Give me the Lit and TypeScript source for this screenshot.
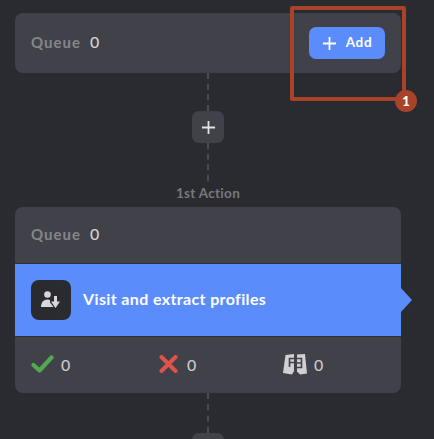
import { LitElement, html, css, svg } from 'lit';
import { customElement } from 'lit/decorators.js';

const plus = (size: number) => svg`<svg width=${size} height=${size} viewBox="0 0 16 16" fill="none" stroke="currentColor" stroke-width="1.9"><path d="M8 1v14M1 8h14"/></svg>`;

@customElement('app-root')
export class AppRoot extends LitElement {
  static styles = css`
    :host {
      display: block;
      position: relative;
      width: 434px;
      height: 439px;
      overflow: hidden;
      background: #2a2b30;
      font-family: Lato, 'Open Sans', sans-serif;
    }
    .flow {
      width: 386px;
      margin-left: 15px;
      padding-top: 13px;
      display: flex;
      flex-direction: column;
      align-items: center;
    }
    .card {
      width: 100%;
      background: #414249;
      border-radius: 8px;
    }
    .queue {
      height: 60px;
      box-sizing: border-box;
      padding: 0 16px 4px;
      display: flex;
      align-items: center;
      justify-content: space-between;
      font-size: 15px;
      font-weight: 700;
      letter-spacing: 1px;
    }
    .queue-text { display: flex; align-items: baseline; gap: 9px; color: #85868a; }
    .queue-text b { color: #d4d4d6; font-weight: 500; font-size: 16px; letter-spacing: 0; }
    .add {
      width: 76px;
      height: 32px;
      margin-bottom: -4px;
      background: #5b8cfb;
      border-radius: 7px;
      color: #fff;
      display: flex;
      align-items: center;
      justify-content: center;
      gap: 9px;
      font-size: 13.5px;
      font-weight: 700;
      letter-spacing: 0.7px;
    }
    .add span { margin-bottom: 2px; }
    .line { width: 0; border-left: 2px dashed #4b4c52; }
    .plus {
      width: 32px;
      height: 32px;
      flex: none;
      border-radius: 7px;
      background: #414249;
      color: #e2e2e3;
      display: flex;
      align-items: center;
      justify-content: center;
    }
    .step-label {
      font-size: 13.5px;
      font-weight: 700;
      line-height: 16px;
      color: #77787c;
      margin: 4px 0 6px;
      letter-spacing: 0.3px;
    }
    .queue.small { height: 56px; }
    .action {
      position: relative;
      height: 74px;
      box-sizing: border-box;
      padding: 0 16px;
      background: #5b8cfb;
      border-top: 1px solid #2f3035;
      border-bottom: 1px solid #2f3035;
      display: flex;
      align-items: center;
      gap: 12px;
      color: #fff;
      font-size: 16px;
      font-weight: 700;
      letter-spacing: 0.37px;
    }
    .action-title { margin-bottom: 3px; }
    .action::after {
      content: '';
      position: absolute;
      left: 100%;
      top: 24px;
      width: 11px;
      height: 24px;
      background: #5b8cfb;
      clip-path: polygon(0 0, 100% 50%, 0 100%);
    }
    .tile {
      width: 40px;
      height: 40px;
      border-radius: 8px;
      background: #2a2b30;
      color: #d8d8da;
      display: flex;
      align-items: center;
      justify-content: center;
    }
    .stats {
      height: 56px;
      box-sizing: border-box;
      padding: 0 0 2px 16px;
      display: grid;
      grid-template-columns: 128px 124px 1fr;
      align-items: center;
      color: #c9c9cc;
      font-size: 16px;
      font-weight: 500;
    }
    .stat { display: flex; align-items: center; gap: 7px; }
    .stat.wide { gap: 9px; }
    .mark {
      position: absolute;
      left: 290px;
      top: 6px;
      width: 116px;
      height: 95px;
      box-sizing: border-box;
      border: 4px solid #a8432a;
      border-radius: 2px;
    }
    .badge {
      position: absolute;
      left: 395px;
      top: 90px;
      width: 22px;
      height: 22px;
      border-radius: 50%;
      background: #a8432a;
      color: #fff;
      font-size: 13px;
      font-weight: 900;
      display: flex;
      align-items: center;
      justify-content: center;
    }
  `;

  render() {
    return html`
      <div class="flow">
        <div class="card queue">
          <span class="queue-text">Queue <b>0</b></span>
          <span class="add">${plus(15)}<span>Add</span></span>
        </div>
        <div class="line" style="height: 38px"></div>
        <div class="plus">${plus(15)}</div>
        <div class="line" style="height: 38px"></div>
        <div class="step-label">1st Action</div>
        <div class="card">
          <div class="queue small"><span class="queue-text">Queue <b>0</b></span></div>
          <div class="action">
            <span class="tile">
              <svg width="20" height="18" viewBox="0 0 20 18" fill="currentColor">
                <circle cx="6.500" cy="3.500" r="3.300"/>
                <path d="M0 16c0-4.500 2.500-7.500 6.500-7.500 1 0 1.800.2 2.500.5v2.500l3.500 4.500z"/>
                <path d="M13 5h3v5.500h3L14.500 17 10 10.500h3z"/>
              </svg>
            </span>
            <span class="action-title">Visit and extract profiles</span>
          </div>
          <div class="stats">
            <span class="stat">
              <svg width="23" height="18" viewBox="0 0 23 18" fill="none" stroke="#55a84f" stroke-width="4.200" stroke-linecap="round" stroke-linejoin="round"><path d="M2.500 10l6 5.500L20.500 2.500"/></svg>
              0
            </span>
            <span class="stat wide">
              <svg width="19" height="18" viewBox="0 0 19 18" fill="none" stroke="#e0524b" stroke-width="4" stroke-linecap="round"><path d="M2.500 2l14 14M16.500 2l-14 14"/></svg>
              0
            </span>
            <span class="stat">
              <svg width="24" height="21" viewBox="0 0 24 21">
                <path fill="#d0d0d2" d="M2.500 1L11 0v17l-2 3.500L0 19z"/>
                <path fill="#d0d0d2" d="M14 0.500L22 0l2 19.500-7 1-3-3z"/>
                <path fill="none" stroke="#414249" stroke-width="1.600" d="M11 4.500H6.500v8.500M6.500 8.500H11M14 4.500h4.500v9H14M14 9h4.500"/>
              </svg>
              0
            </span>
          </div>
        </div>
        <div class="line" style="height: 40px"></div>
        <div class="plus">${plus(15)}</div>
      </div>
      <div class="mark"></div>
      <div class="badge">1</div>
    `;
  }
}
